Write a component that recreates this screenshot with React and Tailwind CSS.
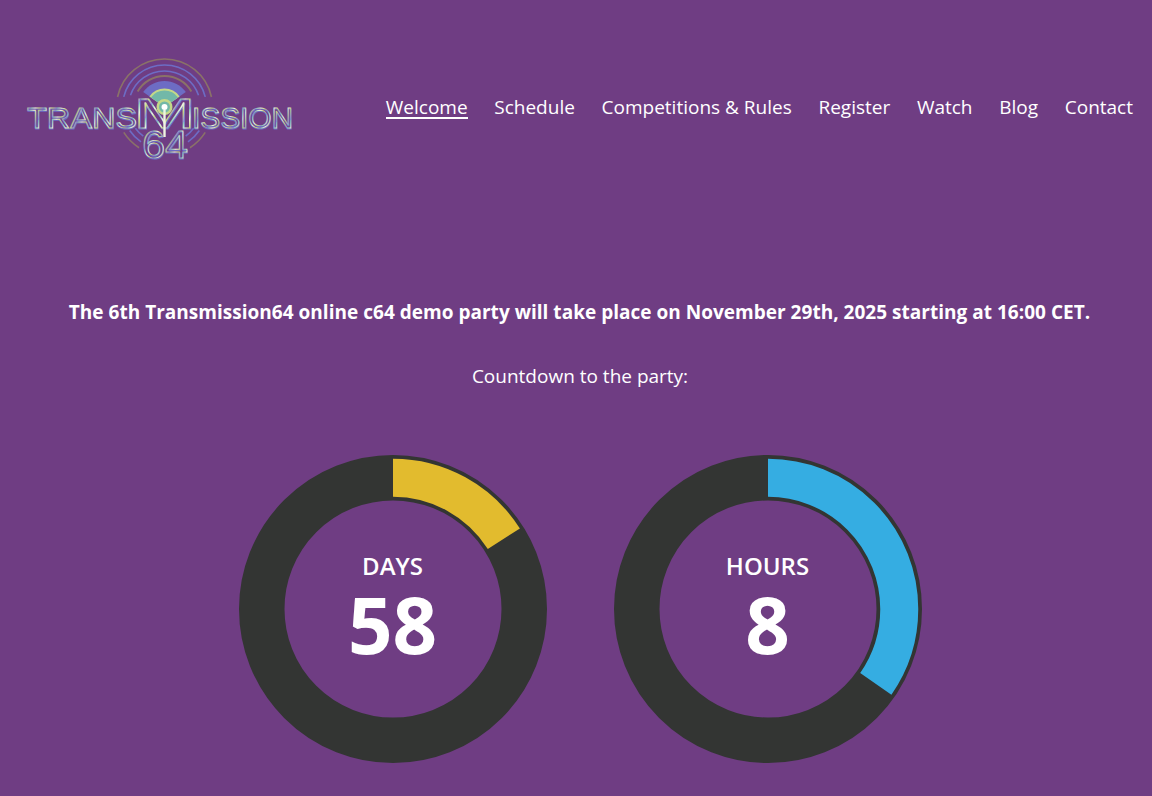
const NAV = ["Welcome", "Schedule", "Competitions & Rules", "Register", "Watch", "Blog", "Contact"]

const RING_C = 2 * Math.PI * 131.25

// logo antenna centre, in page coordinates
const CX = 164.5
const CY = 107

// angle in degrees, clockwise from straight up
const arc = (r, from, to) => {
  const pt = a => {
    const rad = (a * Math.PI) / 180
    return `${(CX + r * Math.sin(rad)).toFixed(2)} ${(CY - r * Math.cos(rad)).toFixed(2)}`
  }
  return `M${pt(from)} A${r} ${r} 0 ${Math.abs(to - from) > 180 ? 1 : 0} 1 ${pt(to)}`
}

const pie = (r, half) => `${arc(r, -half, half)} L${CX} ${CY} Z`

const Ring = ({ label, value, part, color }) => (
  <div className="relative w-[308px] h-[308px]">
    <svg viewBox="0 0 308 308" className="w-full h-full">
      <circle cx="154" cy="154" r="131.25" fill="none" stroke="#333533" strokeWidth="45.5" />
      <circle
        cx="154"
        cy="154"
        r="131.25"
        fill="none"
        stroke={color}
        strokeWidth="38"
        strokeDasharray={`${RING_C * part} ${RING_C}`}
        transform="rotate(-90 154 154)"
      />
    </svg>
    <div className="absolute inset-0 flex flex-col items-center pt-[93px] text-white">
      <p className="text-[24px] leading-[36px] font-semibold">{label}</p>
      <p className="text-[78px] leading-[80px] font-bold">{value}</p>
    </div>
  </div>
)

const LogoText = ({ x, y, size, width, children }) => (
  <g fontFamily="Liberation Sans" fontSize={size}>
    <text x={x + 0.5} y={y + 0.5} textLength={width} lengthAdjust="spacingAndGlyphs" fill="none" stroke="#6c6cc4" strokeWidth="1.2">
      {children}
    </text>
    <text x={x} y={y} textLength={width} lengthAdjust="spacingAndGlyphs" fill="none" stroke="url(#logoBands)" strokeWidth="0.9">
      {children}
    </text>
  </g>
)

const Logo = () => (
  <svg width="280" height="116" viewBox="20 53 280 116" className="block">
    <defs>
      <linearGradient id="logoBands" gradientUnits="userSpaceOnUse" x1="0" y1="0" x2="11" y2="5" spreadMethod="repeat">
        <stop offset="0" stopColor="#7fc4b4" />
        <stop offset="0.35" stopColor="#eef4e0" />
        <stop offset="0.65" stopColor="#c8d880" />
        <stop offset="1" stopColor="#8f8fe0" />
      </linearGradient>
    </defs>

    {/* upper waves */}
    <g fill="none" strokeWidth="1.6">
      <path d={arc(48, -78, 78)} stroke="#8a7268" />
      <path d={arc(42, -76, 76)} stroke="#6d6cc4" />
      <path d={arc(36, -71, 71)} stroke="#6d6cc4" />
      <path d={arc(31, -60, 60)} stroke="#8a7268" strokeWidth="2" />
    </g>
    <path d={pie(26, 55)} fill="#6d6cc4" />
    <path d={pie(18.5, 55)} fill="#c4d888" />
    <path d={pie(16.5, 55)} fill="#72b8a8" />
    <circle cx={CX} cy={CY} r="8" fill="#c4d888" />
    <circle cx={CX} cy={CY} r="5.5" fill="#72b8a8" />
    <circle cx={CX} cy={CY} r="3" fill="#ffffff" />

    {/* lower waves */}
    <g fill="none" strokeWidth="1.6">
      <path d={arc(48, 122, 148)} stroke="#8a7268" />
      <path d={arc(42, 124, 146)} stroke="#6d6cc4" />
      <path d={arc(36, 126, 144)} stroke="#6d6cc4" />
      <path d={arc(48, -148, -122)} stroke="#8a7268" />
      <path d={arc(42, -146, -124)} stroke="#6d6cc4" />
      <path d={arc(36, -144, -126)} stroke="#6d6cc4" />
    </g>

    <LogoText x={27} y={128} size={29} width={110}>TRANS</LogoText>
    <LogoText x={192} y={128} size={29} width={101}>ISSION</LogoText>
    <LogoText x={133} y={128} size={43} width={63}>M</LogoText>
    <LogoText x={142} y={158} size={39} width={46}>64</LogoText>

    {/* mast */}
    <path d={`M${CX} 110V137`} stroke="#eef4e0" strokeWidth="2.4" />
  </svg>
)

export default function App() {
  return (
    <div className="min-h-[796px] bg-[#6f3d83] font-['Open_Sans',sans-serif] text-white overflow-hidden">
      <header className="flex items-start justify-between pl-[20px] pr-[19px] pt-[53px]">
        <Logo />
        <nav className="flex gap-[26.7px] mt-[44px] text-[19px] leading-[20px]">
          {NAV.map((item, i) => (
            <a key={item} className={i === 0 ? "border-b-2 border-white" : ""}>{item}</a>
          ))}
        </nav>
      </header>
      <main className="pl-[8px] text-center text-[19px]">
        <p className="mt-[129px] font-bold tracking-[0.02px] -translate-x-[0.5px]">The 6th Transmission64 online c64 demo party will take place on November 29th, 2025 starting at 16:00 CET.</p>
        <p className="mt-[35px]">Countdown to the party:</p>
        <div className="flex justify-center gap-[67px] mt-[65px]">
          <Ring label="DAYS" value="58" part={0.16} color="#e2bb2e" />
          <Ring label="HOURS" value="8" part={0.3465} color="#35ade2" />
        </div>
      </main>
    </div>
  )
}
